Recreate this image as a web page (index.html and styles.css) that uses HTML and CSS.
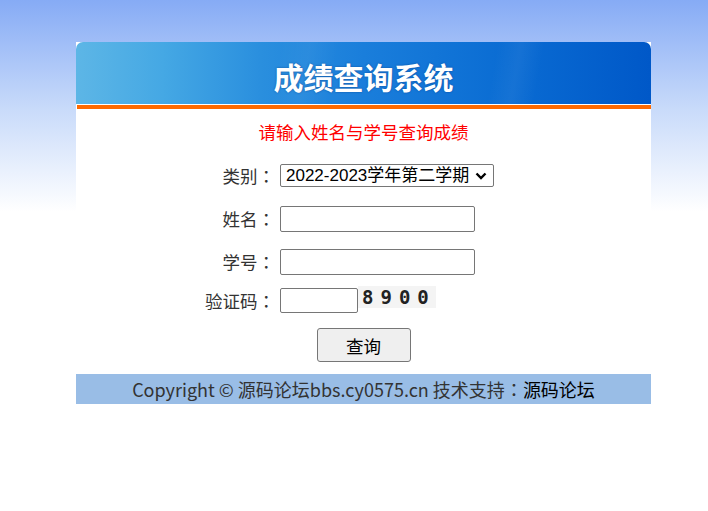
FILE: index.html
```html
<!DOCTYPE html>
<html lang="zh-CN">
<head>
    <meta charset="UTF-8">
    <title>成绩查询系统</title>
    <link rel="stylesheet" href="styles.css">
</head>
<body>
    <div class="box">
        <div class="header">
            <h1>成绩查询系统</h1>
        </div>
        <div class="stripe"></div>
        <form class="content">
            <p class="tip">请输入姓名与学号查询成绩</p>
            <div class="row row-type">
                <label class="lbl">类别<span class="colon" lang="ja">：</span></label>
                <span class="sel-wrap">
                    <select class="sel">
                        <option>2022-2023学年第二学期</option>
                    </select>
                    <svg class="arrow" width="12" height="8" viewBox="0 0 12 8">
                        <path d="M1.5 1.5 L6 6 L10.5 1.5" fill="none" stroke="#000" stroke-width="2.4"/>
                    </svg>
                </span>
            </div>
            <div class="row row-name">
                <label class="lbl">姓名<span class="colon" lang="ja">：</span></label>
                <input type="text" class="txt">
            </div>
            <div class="row row-id">
                <label class="lbl">学号<span class="colon" lang="ja">：</span></label>
                <input type="text" class="txt">
            </div>
            <div class="row row-code">
                <label class="lbl">验证码<span class="colon" lang="ja">：</span></label>
                <input type="text" class="txt code">
                <span class="captcha">8900</span>
            </div>
            <div class="btn-row">
                <button type="button" class="btn">查询</button>
            </div>
        </form>
        <div class="footer">
            Copyright © 源码论坛bbs.cy0575.cn 技术支持<span class="colon" lang="ja">：</span><a href="#">源码论坛</a>
        </div>
    </div>
</body>
</html>
```

FILE: styles.css
```css
html {
    background: #fff linear-gradient(to bottom, #86abf5 0, #c9dbfa 110px, #ffffff 212px) no-repeat;
    background-size: 100% 212px;
}

body {
    margin: 0;
    padding-top: 42px;
    font-family: "Noto Sans CJK SC", "Microsoft YaHei", sans-serif;
    font-size: 16px;
    color: #333;
}

.box {
    width: 575px;
    margin-left: 76px;
    background: #fff;
}

.colon {
    font-family: "Noto Sans CJK JP", "Noto Sans CJK SC", sans-serif;
}

/* HEADER */
.header {
    height: 62px;
    border-radius: 7px 7px 0 0;
    background:
        linear-gradient(100deg, rgba(255,255,255,0) 35%, rgba(255,255,255,0.04) 40%, rgba(255,255,255,0) 45%, rgba(255,255,255,0) 72%, rgba(255,255,255,0.05) 76%, rgba(255,255,255,0) 80%),
        linear-gradient(to right, #5db6e6 0%, #45a8e4 15%, #2a8fde 32%, #1a7edb 50%, #0a6cd3 75%, #0058c8 100%);
    display: flex;
    align-items: center;
    justify-content: center;
}

.header h1 {
    margin: 0;
    padding-top: 5px;
    color: #fff;
    font-size: 30px;
    font-weight: bold;
    text-shadow: 0 0 2px rgba(0, 40, 110, 0.6);
}

.stripe {
    height: 4px;
    margin: 1px 0 0 1px;
    background: #ff6a00;
}

/* FORM */
.content {
    display: flex;
    flex-direction: column;
    padding: 11px 0 12px;
    margin: 0;
}

.tip {
    margin: 0;
    text-align: center;
    color: #ff0000;
    font-size: 17.5px;
    line-height: 24px;
}

.row {
    display: flex;
    align-items: center;
}

.row-type { margin-top: 20px; }
.row-name { margin-top: 19px; }
.row-id   { margin-top: 17px; }
.row-code { margin-top: 13px; }

.lbl {
    width: 199px;
    margin-right: 5px;
    text-align: right;
    font-size: 17.5px;
    line-height: 22px;
}

.sel-wrap {
    position: relative;
    display: inline-block;
}

.sel {
    appearance: none;
    width: 214px;
    height: 23px;
    display: block;
    font-family: "Liberation Sans", "Noto Sans CJK SC", sans-serif;
    font-size: 17px;
    color: #000;
    padding: 0 0 0 5px;
    border: 1px solid #767676;
    border-radius: 2px;
    background: #fff;
}

.arrow {
    position: absolute;
    right: 7px;
    top: 8px;
    pointer-events: none;
}

.txt {
    box-sizing: border-box;
    width: 195px;
    height: 26px;
    margin: 0;
    border: 1px solid #767676;
    border-radius: 2px;
    padding: 1px 4px;
    font-size: 15px;
}

.code {
    width: 78px;
    height: 25px;
}

.captcha {
    display: inline-block;
    align-self: flex-start;
    margin-top: -2px;
    padding: 1px 0 1px 4px;
    width: 74px;
    background: #f4f4f4;
    font-family: "DejaVu Sans Mono", monospace;
    font-weight: bold;
    font-size: 19px;
    line-height: 20px;
    letter-spacing: 7px;
    color: #222;
}

.btn-row {
    margin-top: 15px;
    text-align: center;
}

.btn {
    width: 94px;
    height: 34px;
    font-family: "Noto Sans CJK SC", sans-serif;
    font-size: 17.5px;
    color: #000;
    background: #efefef;
    border: 1px solid #767676;
    border-radius: 3px;
}

/* FOOTER */
.footer {
    height: 30px;
    line-height: 30px;
    background: #99bde6;
    text-align: center;
    font-size: 18px;
    color: #333;
}

.footer a {
    color: #000;
    text-decoration: none;
}
```
